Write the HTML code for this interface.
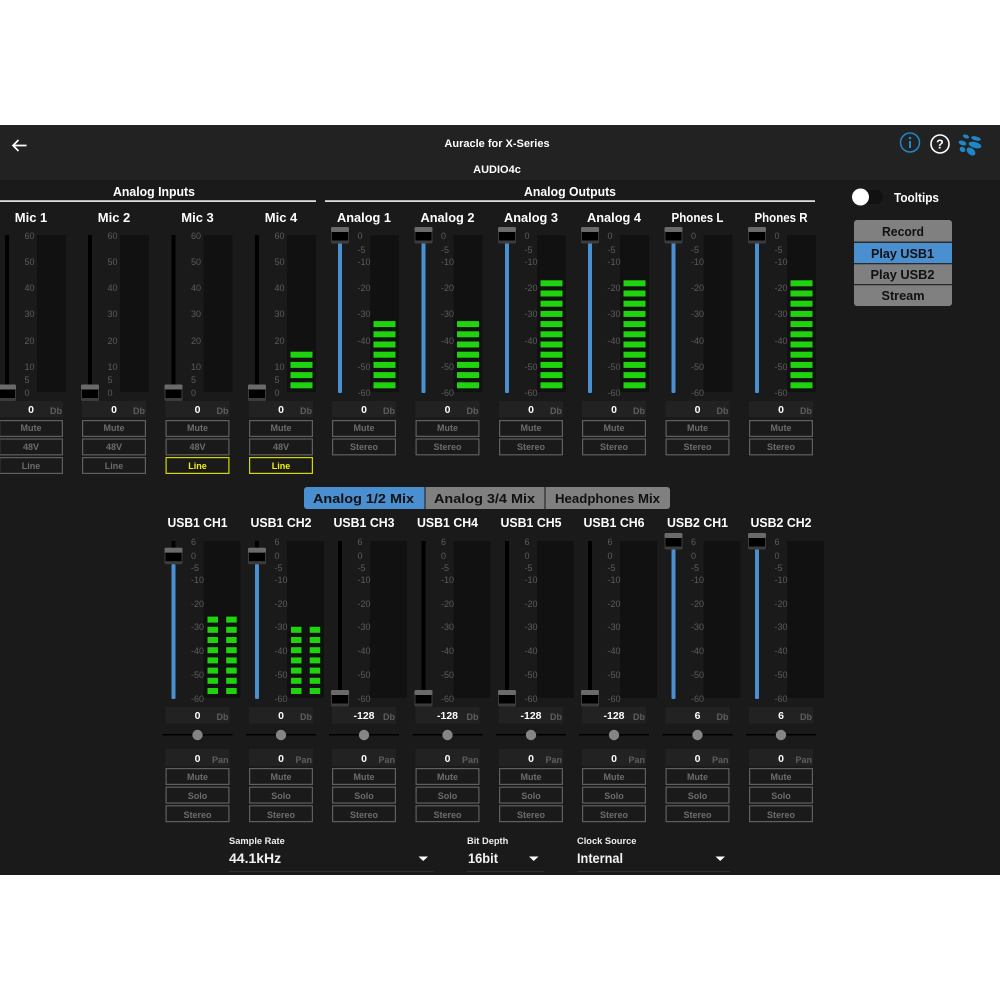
<!DOCTYPE html>
<html><head><meta charset="utf-8"><style>
html,body{margin:0;padding:0;background:#fff;width:1000px;height:1000px;overflow:hidden}
svg{display:block;font-family:"Liberation Sans",sans-serif}
text{font-weight:bold}
.h{fill:#fff;font-size:13px;text-anchor:middle}
.s text{fill:#5c5c5c;font-size:9px;font-weight:normal}
.v{fill:#fff;font-size:10.5px;text-anchor:middle}
.u{fill:#5e5e5e;font-size:9px;text-anchor:end}
.b{fill:#6c6c6c;font-size:9px;text-anchor:middle}
.y{fill:#f2f200;font-size:9px;text-anchor:middle}
.k{fill:#111;font-size:13px;text-anchor:middle}
.l{fill:#eee;font-size:9.3px}
.w{fill:#f2f2f2;font-size:14px}
</style></head><body>
<svg width="1000" height="1000" viewBox="0 0 1000 1000" xmlns="http://www.w3.org/2000/svg">
<defs>
<g id="cap"><rect x="-33" y="0" width="18" height="16.5" rx="1.5" fill="#3c3c3c"/><rect x="-33" y="0" width="18" height="5" rx="1.5" fill="#6a6a6a"/><rect x="-32" y="5" width="16" height="8.5" fill="#000"/></g>
<g id="in"><rect x="-26" y="235" width="4" height="158" fill="#000"/><rect x="6" y="235" width="29" height="157" fill="#111"/><rect x="-32" y="401" width="64" height="16" fill="#222"/>
<g fill="none" stroke="#5f5f5f" stroke-width="1.2"><rect x="-31.4" y="420.6" width="62.8" height="15.8"/><rect x="-31.4" y="439" width="62.8" height="15.8"/></g></g>
<rect id="ln" x="-31.4" y="457.6" width="62.8" height="15.8" fill="none" stroke="#5f5f5f" stroke-width="1.2"/>
<rect id="ly" x="-31.4" y="457.6" width="62.8" height="15.8" fill="none" stroke="#d6d600" stroke-width="1.2"/>
<rect id="bl" x="-26" y="243" width="4" height="150" rx="1" fill="#4a8fd0"/>
<g id="b4" fill="#1fd30f"><rect x="9.5" y="382.3" width="22" height="6"/><rect x="9.5" y="372.1" width="22" height="6"/><rect x="9.5" y="361.9" width="22" height="6"/><rect x="9.5" y="351.7" width="22" height="6"/></g>
<g id="b7" fill="#1fd30f"><use href="#b4"/><rect x="9.5" y="341.5" width="22" height="6"/><rect x="9.5" y="331.3" width="22" height="6"/><rect x="9.5" y="321.1" width="22" height="6"/></g>
<g id="b11" fill="#1fd30f"><use href="#b7"/><rect x="9.5" y="310.9" width="22" height="6"/><rect x="9.5" y="300.7" width="22" height="6"/><rect x="9.5" y="290.5" width="22" height="6"/><rect x="9.5" y="280.3" width="22" height="6"/></g>
<g id="us"><rect x="-26" y="541" width="4" height="158" fill="#000"/><rect x="6" y="541" width="37" height="157" fill="#111"/><rect x="-32" y="707" width="64" height="16.5" fill="#222"/><rect x="-35" y="734" width="70" height="1.5" fill="#000"/><circle cx="0" cy="735" r="5.2" fill="#858585"/><rect x="-32" y="749" width="64" height="17" fill="#222"/>
<g fill="none" stroke="#5f5f5f" stroke-width="1.2"><rect x="-31.4" y="768.6" width="62.8" height="15.8"/><rect x="-31.4" y="787.2" width="62.8" height="15.8"/><rect x="-31.4" y="805.8" width="62.8" height="15.8"/></g></g>
<g id="c7" fill="#1fd30f"><rect x="10" y="688" width="10.5" height="6"/><rect x="10" y="677.8" width="10.5" height="6"/><rect x="10" y="667.6" width="10.5" height="6"/><rect x="10" y="657.4" width="10.5" height="6"/><rect x="10" y="647.2" width="10.5" height="6"/><rect x="10" y="637" width="10.5" height="6"/><rect x="10" y="626.8" width="10.5" height="6"/><rect x="28.7" y="688" width="10.5" height="6"/><rect x="28.7" y="677.8" width="10.5" height="6"/><rect x="28.7" y="667.6" width="10.5" height="6"/><rect x="28.7" y="657.4" width="10.5" height="6"/><rect x="28.7" y="647.2" width="10.5" height="6"/><rect x="28.7" y="637" width="10.5" height="6"/><rect x="28.7" y="626.8" width="10.5" height="6"/></g>
</defs>
<rect width="1000" height="1000" fill="#fff"/>
<rect y="125" width="1000" height="750" fill="#1a1a1a"/>
<rect y="125" width="1000" height="55" fill="#222"/>
<path d="M26.500 145.500H13.500M18.500 140L13 145.500L18.500 151" fill="none" stroke="#fff" stroke-width="1.700"/>
<text x="497" y="147" fill="#fff" font-size="11" text-anchor="middle">Auracle for X-Series</text>
<text x="497" y="173" fill="#fff" font-size="11" text-anchor="middle">AUDIO4c</text>
<circle cx="910" cy="142.500" r="9.500" fill="none" stroke="#1f86c8" stroke-width="1.500"/><circle cx="910" cy="138" r="1.300" fill="#1f86c8"/><rect x="909" y="141" width="2" height="7" fill="#1f86c8"/>
<circle cx="940" cy="144" r="9" fill="none" stroke="#fff" stroke-width="1.600"/><text x="940" y="148.500" fill="#fff" font-size="12.500" text-anchor="middle">?</text>
<g fill="#1f86c8"><ellipse cx="966" cy="136.500" rx="3.200" ry="1.800" transform="rotate(20 966 136.500)"/><ellipse cx="976" cy="138.500" rx="5" ry="2" transform="rotate(15 976 138.500)"/><ellipse cx="962.500" cy="143" rx="4" ry="2.200" transform="rotate(20 962.500 143)"/><ellipse cx="975" cy="145" rx="6.500" ry="3" transform="rotate(15 975 145)"/><ellipse cx="962.500" cy="149.500" rx="3" ry="2.500" transform="rotate(35 962.500 149.500)"/><ellipse cx="971" cy="151.500" rx="5" ry="3.300" transform="rotate(40 971 151.500)"/></g>
<text class="h" x="154" y="196" textLength="82" lengthAdjust="spacingAndGlyphs">Analog Inputs</text>
<text class="h" x="570" y="196" textLength="92" lengthAdjust="spacingAndGlyphs">Analog Outputs</text>
<rect x="0" y="200.300" width="316" height="1.600" fill="#f4f4f4"/><rect x="325" y="200.300" width="490" height="1.600" fill="#f4f4f4"/>

<g transform="translate(31 0)"><use href="#in"/><use href="#ln"/><use href="#cap" y="384.500"/><text class="h" y="222">Mic 1</text><g class="s"><text x="-6.500" y="239">60</text><text x="-6.500" y="265">50</text><text x="-6.500" y="291">40</text><text x="-6.500" y="317">30</text><text x="-6.500" y="344">20</text><text x="-6.500" y="370">10</text><text x="-6.500" y="383">5</text><text x="-6.500" y="396">0</text></g><text class="v" y="413">0</text><text class="u" x="31" y="414">Db</text><text class="b" y="431">Mute</text><text class="b" y="450">48V</text><text class="b" y="469">Line</text></g>
<g transform="translate(114 0)"><use href="#in"/><use href="#ln"/><use href="#cap" y="384.500"/><text class="h" y="222">Mic 2</text><g class="s"><text x="-6.500" y="239">60</text><text x="-6.500" y="265">50</text><text x="-6.500" y="291">40</text><text x="-6.500" y="317">30</text><text x="-6.500" y="344">20</text><text x="-6.500" y="370">10</text><text x="-6.500" y="383">5</text><text x="-6.500" y="396">0</text></g><text class="v" y="413">0</text><text class="u" x="31" y="414">Db</text><text class="b" y="431">Mute</text><text class="b" y="450">48V</text><text class="b" y="469">Line</text></g>
<g transform="translate(197.500 0)"><use href="#in"/><use href="#ly"/><use href="#cap" y="384.500"/><text class="h" y="222">Mic 3</text><g class="s"><text x="-6.500" y="239">60</text><text x="-6.500" y="265">50</text><text x="-6.500" y="291">40</text><text x="-6.500" y="317">30</text><text x="-6.500" y="344">20</text><text x="-6.500" y="370">10</text><text x="-6.500" y="383">5</text><text x="-6.500" y="396">0</text></g><text class="v" y="413">0</text><text class="u" x="31" y="414">Db</text><text class="b" y="431">Mute</text><text class="b" y="450">48V</text><text class="y" y="469">Line</text></g>
<g transform="translate(281 0)"><use href="#in"/><use href="#ly"/><use href="#cap" y="384.500"/><use href="#b4"/><text class="h" y="222">Mic 4</text><g class="s"><text x="-6.500" y="239">60</text><text x="-6.500" y="265">50</text><text x="-6.500" y="291">40</text><text x="-6.500" y="317">30</text><text x="-6.500" y="344">20</text><text x="-6.500" y="370">10</text><text x="-6.500" y="383">5</text><text x="-6.500" y="396">0</text></g><text class="v" y="413">0</text><text class="u" x="31" y="414">Db</text><text class="b" y="431">Mute</text><text class="b" y="450">48V</text><text class="y" y="469">Line</text></g>

<g transform="translate(364 0)"><use href="#in"/><use href="#bl"/><use href="#cap" y="227"/><use href="#b7"/><text class="h" y="222" textLength="54" lengthAdjust="spacingAndGlyphs">Analog 1</text><g class="s"><text x="-6.500" y="239">0</text><text x="-6.500" y="253">-5</text><text x="-6.500" y="265">-10</text><text x="-6.500" y="291">-20</text><text x="-6.500" y="317">-30</text><text x="-6.500" y="344">-40</text><text x="-6.500" y="370">-50</text><text x="-6.500" y="396">-60</text></g><text class="v" y="413">0</text><text class="u" x="31" y="414">Db</text><text class="b" y="431">Mute</text><text class="b" y="450">Stereo</text></g>
<g transform="translate(447.500 0)"><use href="#in"/><use href="#bl"/><use href="#cap" y="227"/><use href="#b7"/><text class="h" y="222" textLength="54" lengthAdjust="spacingAndGlyphs">Analog 2</text><g class="s"><text x="-6.500" y="239">0</text><text x="-6.500" y="253">-5</text><text x="-6.500" y="265">-10</text><text x="-6.500" y="291">-20</text><text x="-6.500" y="317">-30</text><text x="-6.500" y="344">-40</text><text x="-6.500" y="370">-50</text><text x="-6.500" y="396">-60</text></g><text class="v" y="413">0</text><text class="u" x="31" y="414">Db</text><text class="b" y="431">Mute</text><text class="b" y="450">Stereo</text></g>
<g transform="translate(531 0)"><use href="#in"/><use href="#bl"/><use href="#cap" y="227"/><use href="#b11"/><text class="h" y="222" textLength="54" lengthAdjust="spacingAndGlyphs">Analog 3</text><g class="s"><text x="-6.500" y="239">0</text><text x="-6.500" y="253">-5</text><text x="-6.500" y="265">-10</text><text x="-6.500" y="291">-20</text><text x="-6.500" y="317">-30</text><text x="-6.500" y="344">-40</text><text x="-6.500" y="370">-50</text><text x="-6.500" y="396">-60</text></g><text class="v" y="413">0</text><text class="u" x="31" y="414">Db</text><text class="b" y="431">Mute</text><text class="b" y="450">Stereo</text></g>
<g transform="translate(614 0)"><use href="#in"/><use href="#bl"/><use href="#cap" y="227"/><use href="#b11"/><text class="h" y="222" textLength="54" lengthAdjust="spacingAndGlyphs">Analog 4</text><g class="s"><text x="-6.500" y="239">0</text><text x="-6.500" y="253">-5</text><text x="-6.500" y="265">-10</text><text x="-6.500" y="291">-20</text><text x="-6.500" y="317">-30</text><text x="-6.500" y="344">-40</text><text x="-6.500" y="370">-50</text><text x="-6.500" y="396">-60</text></g><text class="v" y="413">0</text><text class="u" x="31" y="414">Db</text><text class="b" y="431">Mute</text><text class="b" y="450">Stereo</text></g>
<g transform="translate(697.500 0)"><use href="#in"/><use href="#bl"/><use href="#cap" y="227"/><text class="h" y="222" textLength="52" lengthAdjust="spacingAndGlyphs">Phones L</text><g class="s"><text x="-6.500" y="239">0</text><text x="-6.500" y="253">-5</text><text x="-6.500" y="265">-10</text><text x="-6.500" y="291">-20</text><text x="-6.500" y="317">-30</text><text x="-6.500" y="344">-40</text><text x="-6.500" y="370">-50</text><text x="-6.500" y="396">-60</text></g><text class="v" y="413">0</text><text class="u" x="31" y="414">Db</text><text class="b" y="431">Mute</text><text class="b" y="450">Stereo</text></g>
<g transform="translate(781 0)"><use href="#in"/><use href="#bl"/><use href="#cap" y="227"/><use href="#b11"/><text class="h" y="222" textLength="53" lengthAdjust="spacingAndGlyphs">Phones R</text><g class="s"><text x="-6.500" y="239">0</text><text x="-6.500" y="253">-5</text><text x="-6.500" y="265">-10</text><text x="-6.500" y="291">-20</text><text x="-6.500" y="317">-30</text><text x="-6.500" y="344">-40</text><text x="-6.500" y="370">-50</text><text x="-6.500" y="396">-60</text></g><text class="v" y="413">0</text><text class="u" x="31" y="414">Db</text><text class="b" y="431">Mute</text><text class="b" y="450">Stereo</text></g>

<rect x="852" y="190" width="31" height="14" rx="7" fill="#111"/><circle cx="860.500" cy="197" r="8.500" fill="#fff"/>
<text x="894" y="202" fill="#fff" font-size="13" textLength="45" lengthAdjust="spacingAndGlyphs">Tooltips</text>
<rect x="854" y="220" width="98" height="86" rx="3" fill="#808080"/>
<rect x="854" y="243" width="98" height="20" fill="#4a8fd0"/>
<rect x="854" y="241.500" width="98" height="1.500" fill="#2a2a2a"/><rect x="854" y="263" width="98" height="1.300" fill="#2a2a2a"/><rect x="854" y="284" width="98" height="1.300" fill="#2a2a2a"/>
<text class="k" x="903" y="236" textLength="42" lengthAdjust="spacingAndGlyphs">Record</text><text class="k" x="902.500" y="258" textLength="63" lengthAdjust="spacingAndGlyphs">Play USB1</text><text class="k" x="902.500" y="279" textLength="64" lengthAdjust="spacingAndGlyphs">Play USB2</text><text class="k" x="903" y="300" textLength="43" lengthAdjust="spacingAndGlyphs">Stream</text>

<path d="M307 487H424.500V509H307a3 3 0 0 1-3-3V490a3 3 0 0 1 3-3Z" fill="#4a8fd0"/>
<rect x="425.500" y="487" width="119" height="22" fill="#808080"/>
<path d="M545.500 487H667a3 3 0 0 1 3 3V506a3 3 0 0 1-3 3H545.500Z" fill="#808080"/>
<text class="k" x="363.500" y="503" textLength="101" lengthAdjust="spacingAndGlyphs">Analog 1/2 Mix</text><text class="k" x="484.500" y="503" textLength="101" lengthAdjust="spacingAndGlyphs">Analog 3/4 Mix</text><text class="k" x="607.500" y="503" textLength="105" lengthAdjust="spacingAndGlyphs">Headphones Mix</text>

<g transform="translate(197.500 0)"><use href="#us"/><rect x="-26" y="564" width="4" height="135" rx="1" fill="#4a8fd0"/><use href="#cap" y="547.700"/><use href="#c7"/><rect x="10" y="616.600" width="10.500" height="6" fill="#1fd30f"/><rect x="28.700" y="616.600" width="10.500" height="6" fill="#1fd30f"/><text class="h" y="527" textLength="60" lengthAdjust="spacingAndGlyphs">USB1 CH1</text><g class="s"><text x="-6.500" y="545">6</text><text x="-6.500" y="559">0</text><text x="-6.500" y="571">-5</text><text x="-6.500" y="583">-10</text><text x="-6.500" y="607">-20</text><text x="-6.500" y="630">-30</text><text x="-6.500" y="654">-40</text><text x="-6.500" y="678">-50</text><text x="-6.500" y="702">-60</text></g><text class="v" y="719">0</text><text class="u" x="31" y="720">Db</text><text class="v" y="762">0</text><text class="u" x="31" y="763">Pan</text><text class="b" y="780">Mute</text><text class="b" y="799">Solo</text><text class="b" y="818">Stereo</text></g>
<g transform="translate(281 0)"><use href="#us"/><rect x="-26" y="564" width="4" height="135" rx="1" fill="#4a8fd0"/><use href="#cap" y="547.700"/><use href="#c7"/><text class="h" y="527" textLength="61" lengthAdjust="spacingAndGlyphs">USB1 CH2</text><g class="s"><text x="-6.500" y="545">6</text><text x="-6.500" y="559">0</text><text x="-6.500" y="571">-5</text><text x="-6.500" y="583">-10</text><text x="-6.500" y="607">-20</text><text x="-6.500" y="630">-30</text><text x="-6.500" y="654">-40</text><text x="-6.500" y="678">-50</text><text x="-6.500" y="702">-60</text></g><text class="v" y="719">0</text><text class="u" x="31" y="720">Db</text><text class="v" y="762">0</text><text class="u" x="31" y="763">Pan</text><text class="b" y="780">Mute</text><text class="b" y="799">Solo</text><text class="b" y="818">Stereo</text></g>
<g transform="translate(364 0)"><use href="#us"/><use href="#cap" y="690"/><text class="h" y="527" textLength="61" lengthAdjust="spacingAndGlyphs">USB1 CH3</text><g class="s"><text x="-6.500" y="545">6</text><text x="-6.500" y="559">0</text><text x="-6.500" y="571">-5</text><text x="-6.500" y="583">-10</text><text x="-6.500" y="607">-20</text><text x="-6.500" y="630">-30</text><text x="-6.500" y="654">-40</text><text x="-6.500" y="678">-50</text><text x="-6.500" y="702">-60</text></g><text class="v" y="719">-128</text><text class="u" x="31" y="720">Db</text><text class="v" y="762">0</text><text class="u" x="31" y="763">Pan</text><text class="b" y="780">Mute</text><text class="b" y="799">Solo</text><text class="b" y="818">Stereo</text></g>
<g transform="translate(447.500 0)"><use href="#us"/><use href="#cap" y="690"/><text class="h" y="527" textLength="61" lengthAdjust="spacingAndGlyphs">USB1 CH4</text><g class="s"><text x="-6.500" y="545">6</text><text x="-6.500" y="559">0</text><text x="-6.500" y="571">-5</text><text x="-6.500" y="583">-10</text><text x="-6.500" y="607">-20</text><text x="-6.500" y="630">-30</text><text x="-6.500" y="654">-40</text><text x="-6.500" y="678">-50</text><text x="-6.500" y="702">-60</text></g><text class="v" y="719">-128</text><text class="u" x="31" y="720">Db</text><text class="v" y="762">0</text><text class="u" x="31" y="763">Pan</text><text class="b" y="780">Mute</text><text class="b" y="799">Solo</text><text class="b" y="818">Stereo</text></g>
<g transform="translate(531 0)"><use href="#us"/><use href="#cap" y="690"/><text class="h" y="527" textLength="61" lengthAdjust="spacingAndGlyphs">USB1 CH5</text><g class="s"><text x="-6.500" y="545">6</text><text x="-6.500" y="559">0</text><text x="-6.500" y="571">-5</text><text x="-6.500" y="583">-10</text><text x="-6.500" y="607">-20</text><text x="-6.500" y="630">-30</text><text x="-6.500" y="654">-40</text><text x="-6.500" y="678">-50</text><text x="-6.500" y="702">-60</text></g><text class="v" y="719">-128</text><text class="u" x="31" y="720">Db</text><text class="v" y="762">0</text><text class="u" x="31" y="763">Pan</text><text class="b" y="780">Mute</text><text class="b" y="799">Solo</text><text class="b" y="818">Stereo</text></g>
<g transform="translate(614 0)"><use href="#us"/><use href="#cap" y="690"/><text class="h" y="527" textLength="61" lengthAdjust="spacingAndGlyphs">USB1 CH6</text><g class="s"><text x="-6.500" y="545">6</text><text x="-6.500" y="559">0</text><text x="-6.500" y="571">-5</text><text x="-6.500" y="583">-10</text><text x="-6.500" y="607">-20</text><text x="-6.500" y="630">-30</text><text x="-6.500" y="654">-40</text><text x="-6.500" y="678">-50</text><text x="-6.500" y="702">-60</text></g><text class="v" y="719">-128</text><text class="u" x="31" y="720">Db</text><text class="v" y="762">0</text><text class="u" x="31" y="763">Pan</text><text class="b" y="780">Mute</text><text class="b" y="799">Solo</text><text class="b" y="818">Stereo</text></g>
<g transform="translate(697.500 0)"><use href="#us"/><rect x="-26" y="549" width="4" height="150" rx="1" fill="#4a8fd0"/><use href="#cap" y="533"/><text class="h" y="527" textLength="61" lengthAdjust="spacingAndGlyphs">USB2 CH1</text><g class="s"><text x="-6.500" y="545">6</text><text x="-6.500" y="559">0</text><text x="-6.500" y="571">-5</text><text x="-6.500" y="583">-10</text><text x="-6.500" y="607">-20</text><text x="-6.500" y="630">-30</text><text x="-6.500" y="654">-40</text><text x="-6.500" y="678">-50</text><text x="-6.500" y="702">-60</text></g><text class="v" y="719">6</text><text class="u" x="31" y="720">Db</text><text class="v" y="762">0</text><text class="u" x="31" y="763">Pan</text><text class="b" y="780">Mute</text><text class="b" y="799">Solo</text><text class="b" y="818">Stereo</text></g>
<g transform="translate(781 0)"><use href="#us"/><rect x="-26" y="549" width="4" height="150" rx="1" fill="#4a8fd0"/><use href="#cap" y="533"/><text class="h" y="527" textLength="61" lengthAdjust="spacingAndGlyphs">USB2 CH2</text><g class="s"><text x="-6.500" y="545">6</text><text x="-6.500" y="559">0</text><text x="-6.500" y="571">-5</text><text x="-6.500" y="583">-10</text><text x="-6.500" y="607">-20</text><text x="-6.500" y="630">-30</text><text x="-6.500" y="654">-40</text><text x="-6.500" y="678">-50</text><text x="-6.500" y="702">-60</text></g><text class="v" y="719">6</text><text class="u" x="31" y="720">Db</text><text class="v" y="762">0</text><text class="u" x="31" y="763">Pan</text><text class="b" y="780">Mute</text><text class="b" y="799">Solo</text><text class="b" y="818">Stereo</text></g>

<text class="l" x="229" y="844">Sample Rate</text><text class="w" x="229" y="863">44.1kHz</text><path d="M418.500 856.500H428L423.200 861Z" fill="#fff"/><rect x="229" y="871" width="204" height="1" fill="#2e2e2e"/>
<text class="l" x="467" y="844">Bit Depth</text><text class="w" x="468" y="863" textLength="30" lengthAdjust="spacingAndGlyphs">16bit</text><path d="M529 856.500H538.500L533.700 861Z" fill="#fff"/><rect x="467" y="871" width="77" height="1" fill="#2e2e2e"/>
<text class="l" x="577" y="844">Clock Source</text><text class="w" x="577" y="863" textLength="46" lengthAdjust="spacingAndGlyphs">Internal</text><path d="M715.500 856.500H725L720.200 861Z" fill="#fff"/><rect x="577" y="871" width="153" height="1" fill="#2e2e2e"/>
</svg>
</body></html>
